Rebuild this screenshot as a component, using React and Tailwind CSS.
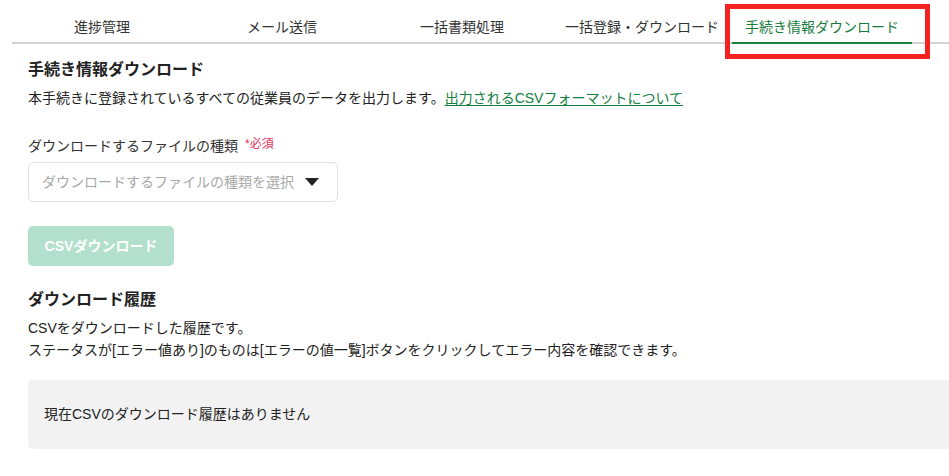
import React from "react";

const tabs = ["進捗管理", "メール送信", "一括書類処理", "一括登録・ダウンロード", "手続き情報ダウンロード"];

export default function App() {
  return (
    <div
      className="relative w-[949px] h-[476px] overflow-hidden bg-white text-[#333]"
      style={{ fontFamily: '"Liberation Sans", "Noto Sans CJK JP", sans-serif' }}
    >
      <div className="ml-[12px] flex border-b-2 border-[#d3d3d3]">
        {tabs.map((t, i) => {
          const active = i === tabs.length - 1;
          return (
            <div
              key={t}
              className={
                active
                  ? "w-[180px] -mb-[2px] pt-[17px] pb-[5px] text-center text-[14px] leading-5 text-[#1a7d3e] border-b-2 border-[#16803d]"
                  : "w-[180px] -mb-[2px] pt-[17px] pb-[5px] text-center text-[14px] leading-5 text-[#333] border-b-2 border-transparent"
              }
            >
              {t}
            </div>
          );
        })}
      </div>

      <div className="pl-[28px]">
        <h1 className="mt-[14px] text-[16px] leading-6 font-bold text-[#222]">手続き情報ダウンロード</h1>
        <p className="mt-[6px] text-[14px] leading-5 text-[#222]">
          本手続きに登録されているすべての従業員のデータを出力します。
          <a className="text-[#12803f] underline underline-offset-2">出力されるCSVフォーマットについて</a>
        </p>

        <div className="mt-[28px] flex items-start text-[14px] leading-5 text-[#333]">
          <span>ダウンロードするファイルの種類</span>
          <span className="ml-[7px] text-[12px] leading-4 text-[#e0355c]">*必須</span>
        </div>

        <div className="mt-[6px] w-[310px] h-[40px] flex items-center justify-between pl-[13px] pr-[18px] border border-[#e2e2e2] rounded-[5px]">
          <span className="text-[14px] text-[#a8a8a8]">ダウンロードするファイルの種類を選択</span>
          <svg width="14" height="8" viewBox="0 0 14 8">
            <path d="M0 0 L14 0 L7 8 Z" fill="#222" />
          </svg>
        </div>

        <button className="mt-[24px] w-[146px] h-[40px] rounded-[5px] bg-[#b3e0cc] text-white text-[14px] font-bold flex items-center justify-center">
          CSVダウンロード
        </button>

        <h2 className="mt-[22px] text-[16px] leading-6 font-bold text-[#222]">ダウンロード履歴</h2>
        <div className="mt-[5px] text-[14px] leading-[22px] text-[#222]">
          <p>CSVをダウンロードした履歴です。</p>
          <p>ステータスが[エラー値あり]のものは[エラーの値一覧]ボタンをクリックしてエラー内容を確認できます。</p>
        </div>

        <div className="mt-[19px] h-[69px] w-[960px] rounded-[5px] bg-[#f2f2f2] flex items-center pl-[16px] text-[14px] text-[#222]">
          現在CSVのダウンロード履歴はありません
        </div>
      </div>

      <div className="absolute left-[725px] top-[4px] w-[205px] h-[55px] border-[5px] border-[#f52222]" />
    </div>
  );
}
